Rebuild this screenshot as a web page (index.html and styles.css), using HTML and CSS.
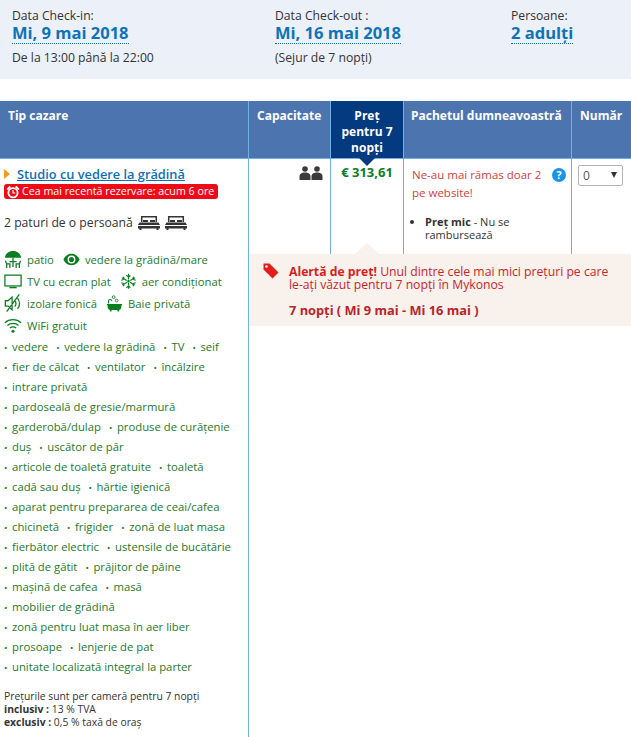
FILE: index.html
```html
<!DOCTYPE html>
<html lang="ro">
<head>
<meta charset="utf-8">
<title>Tip cazare</title>
<link rel="stylesheet" href="styles.css">
</head>
<body>
<section class="summary">
  <div class="sum-col sc1">
    <div class="sum-label">Data Check-in:</div>
    <div class="sum-value">Mi, 9 mai 2018</div>
    <div class="sum-note">De la 13:00 până la 22:00</div>
  </div>
  <div class="sum-col sc2">
    <div class="sum-label">Data Check-out :</div>
    <div class="sum-value">Mi, 16 mai 2018</div>
    <div class="sum-note">(Sejur de 7 nopți)</div>
  </div>
  <div class="sum-col sc3">
    <div class="sum-label">Persoane:</div>
    <div class="sum-value">2 adulţi</div>
  </div>
</section>

<div class="thead">
  <div class="th th1">Tip cazare</div>
  <div class="th th2">Capacitate</div>
  <div class="th th3">Preţ pentru 7 nopţi</div>
  <div class="th th4">Pachetul dumneavoastră</div>
  <div class="th th5">Număr</div>
</div>

<div class="tbody">
  <div class="room">
    <div class="room-title"><span class="arrow"></span><a class="room-link">Studio cu vedere la grădină</a></div>
    <div class="recent">
      <svg class="alarm" viewBox="0 0 14 14"><circle cx="7" cy="7.800" r="4.600" fill="none" stroke="#fff" stroke-width="1.800"/><path d="M7 5v3h2.300" fill="none" stroke="#fff" stroke-width="1.200"/><path d="M.5 4 3.500.8 5 2.300 2 5.300zM13.500 4 10.500.8 9 2.300l3 3z" fill="#fff"/></svg>
      <span>Cea mai recentă rezervare: acum 6 ore</span>
    </div>
    <div class="beds"><span>2 paturi de o persoană</span>
      <svg class="bed" viewBox="0 0 22 15"><path d="M3.700 7V1.700h14.600V7" fill="none" stroke="#333" stroke-width="1.500"/><path d="M5 5h5v2H5zM12 5h5v2h-5z" fill="#333"/><path d="M1.500 7.500h19L22 10H0zM0 11h22v2.500h-1.500V15h-2v-1.500h-15V15h-2v-1.500H0z" fill="#333"/></svg>
      <svg class="bed" viewBox="0 0 22 15"><path d="M3.700 7V1.700h14.600V7" fill="none" stroke="#333" stroke-width="1.500"/><path d="M5 5h5v2H5zM12 5h5v2h-5z" fill="#333"/><path d="M1.500 7.500h19L22 10H0zM0 11h22v2.500h-1.500V15h-2v-1.500h-15V15h-2v-1.500H0z" fill="#333"/></svg>
    </div>
    <div class="fac-icons">
      <div class="fac-row">
        <span class="fac"><svg class="ic" viewBox="0 0 20 20"><path d="M1 8.500C1.500 3.500 6 1 10 1s8.500 2.500 9 7.500z" fill="#0a7d1f"/><path d="M10 8v11M6 13h8M1.500 12l1.500 3.500V20M3 15.500h3.500V20M18.500 12 17 15.500V20M17 15.500h-3.500V20" fill="none" stroke="#0a7d1f" stroke-width="1.400"/></svg>patio</span>
        <span class="fac"><svg class="ic ic-s" viewBox="0 0 20 20"><path d="M.5 10C3 5 6.500 3.300 10 3.300s7 1.700 9.500 6.700c-2.500 5-6 6.700-9.500 6.700S3 15 .5 10z" fill="#0a7d1f"/><circle cx="10" cy="10" r="4.600" fill="#fff"/><circle cx="10" cy="10" r="3" fill="#0a7d1f"/></svg>vedere la grădină/mare</span>
      </div>
      <div class="fac-row">
        <span class="fac"><svg class="ic" viewBox="0 0 20 20"><rect x="1" y="3.500" width="18" height="12" fill="none" stroke="#0a7d1f" stroke-width="1.400"/><path d="M6 17.300h8" stroke="#0a7d1f" stroke-width="1.600"/></svg>TV cu ecran plat</span>
        <span class="fac"><svg class="ic ic-s" viewBox="0 0 20 20"><path d="M10 1v18M2.200 5.500l15.600 9M17.800 5.500l-15.600 9M7.500 2.500 10 5l2.500-2.500M7.500 17.500 10 15l2.500 2.500M1.500 8.500 5 7.500 4 4M18.500 8.500 15 7.500l1-3.500M1.500 11.500l3.500 1L4 16M18.500 11.500l-3.500 1 1 3.500" fill="none" stroke="#0a7d1f" stroke-width="1.400" stroke-dasharray="3 .6"/></svg>aer condiţionat</span>
      </div>
      <div class="fac-row">
        <span class="fac"><svg class="ic" viewBox="0 0 20 20"><path d="M1.500 7.500h3l4.500-4v14l-4.500-4h-3zM12 7c1.500 2 1.500 5 0 7M15 4.500c3 3.500 3 8.500 0 12M3 19.500 17 .5" fill="none" stroke="#0a7d1f" stroke-width="1.400"/></svg>izolare fonică</span>
        <span class="fac"><svg class="ic ic-s" viewBox="0 0 20 20"><path d="M1 10.500h18V12h-1v2.500c0 2-1.500 3-3 3H5c-1.500 0-3-1-3-3V12H1zM4.500 17.500h2V19.500h-2zM13.500 17.500h2V19.500h-2z" fill="#0a7d1f"/><path d="M3 10V7c0-2.300 3.500-2.300 4 0" fill="none" stroke="#0a7d1f" stroke-width="1.300"/><circle cx="9" cy="2.500" r="1.600" fill="none" stroke="#0a7d1f"/><circle cx="12.500" cy="6.500" r="1.600" fill="none" stroke="#0a7d1f"/></svg>Baie privată</span>
      </div>
      <div class="fac-row">
        <span class="fac"><svg class="ic" viewBox="0 0 20 20"><path d="M1 7.500C6 3 14 3 19 7.500M3.800 10.500c3.500-3 9-3 12.400 0M6.500 13.300c2-1.500 5-1.500 7 0" fill="none" stroke="#0a7d1f" stroke-width="1.400"/><circle cx="10" cy="17" r="1.700" fill="#0a7d1f"/></svg>WiFi gratuit</span>
      </div>
    </div>
    <ul class="amen">
      <li><span>vedere</span><span>vedere la grădină</span><span>TV</span><span>seif</span></li>
      <li><span>fier de călcat</span><span>ventilator</span><span>încălzire</span></li>
      <li><span>intrare privată</span></li>
      <li><span>pardoseală de gresie/marmură</span></li>
      <li><span>garderobă/dulap</span><span>produse de curățenie</span></li>
      <li><span>duş</span><span>uscător de păr</span></li>
      <li><span>articole de toaletă gratuite</span><span>toaletă</span></li>
      <li><span>cadă sau duş</span><span>hârtie igienică</span></li>
      <li><span>aparat pentru prepararea de ceai/cafea</span></li>
      <li><span>chicinetă</span><span>frigider</span><span>zonă de luat masa</span></li>
      <li><span>fierbător electric</span><span>ustensile de bucătărie</span></li>
      <li><span>plită de gătit</span><span>prăjitor de pâine</span></li>
      <li><span>maşină de cafea</span><span>masă</span></li>
      <li><span>mobilier de grădină</span></li>
      <li><span>zonă pentru luat masa în aer liber</span></li>
      <li><span>prosoape</span><span>lenjerie de pat</span></li>
      <li><span>unitate localizată integral la parter</span></li>
    </ul>
    <div class="tax">
      <div>Preţurile sunt per cameră pentru 7 nopţi</div>
      <div><b>inclusiv :</b> 13 % TVA</div>
      <div><b>exclusiv :</b> 0,5 % taxă de oraş</div>
    </div>
  </div>

  <div class="right">
    <div class="cells">
      <div class="cell c-cap">
        <svg class="people" viewBox="0 0 24 14"><circle cx="6" cy="3" r="2.800" fill="#3a3a3a"/><path d="M.5 14v-3.500C.5 7.500 3 6.500 6 6.500s5.500 1 5.500 4V14z" fill="#3a3a3a"/><circle cx="18" cy="3" r="2.800" fill="#3a3a3a"/><path d="M12.500 14v-3.500c0-3 2.500-4 5.500-4s5.500 1 5.500 4V14z" fill="#3a3a3a"/></svg>
      </div>
      <div class="cell c-price">€ 313,61</div>
      <div class="cell c-pack">
        <div class="left-wrap">
          <div class="left-msg">Ne-au mai rămas doar 2 pe website!</div>
          <span class="help">?</span>
        </div>
        <ul class="pack-list"><li><b>Preţ mic</b> - Nu se rambursează</li></ul>
      </div>
      <div class="cell c-num">
        <div class="select"><span>0</span><i></i></div>
      </div>
    </div>
    <div class="alert">
      <svg class="tag" viewBox="0 0 16 16"><path d="M.5 2.500V.5h6l9 9-6 6-9-9z" fill="#e31c1c"/><circle cx="3.500" cy="3.500" r="1.300" fill="#f9f1eb"/></svg>
      <div class="alert-body">
        <p class="alert-text"><b>Alertă de preţ!</b> Unul dintre cele mai mici preţuri pe care <span class="nowrap">le-aţi</span> văzut pentru 7 nopţi în Mykonos</p>
        <p class="alert-dates">7 nopți ( Mi 9 mai - Mi 16 mai )</p>
      </div>
    </div>
  </div>
</div>
</body>
</html>
```

FILE: styles.css
```css
* { box-sizing: border-box; }
html, body { margin: 0; padding: 0; }
body {
  width: 631px;
  height: 737px;
  overflow: hidden;
  background: #fff;
  color: #333;
  font-family: "Open Sans", "Noto Sans", sans-serif;
  font-size: 12px;
}
.summary {
  display: flex;
  height: 79px;
  background: #ebf0f9;
  padding-top: 8px;
}
.sum-col { flex: none; }
.sc1 { width: 263px; padding-left: 12px; }
.sc2 { width: 236px; padding-left: 12px; }
.sc3 { padding-left: 12px; }
.sum-label { font-size: 12.200px; line-height: 15px; }
.sum-value {
  display: table;
  font-size: 16.500px;
  line-height: 20px;
  font-weight: 700;
  color: #0f73b8;
  border-bottom: 1px dotted #0f73b8;
  margin-bottom: 6px;
}
.sum-note { font-size: 12.200px; line-height: 16px; }

.thead {
  display: grid;
  grid-template-columns: 249px 82px 73px 168px 59px;
  height: 58px;
  margin-top: 22px;
  background: #4c75b0;
  color: #fff;
  font-weight: 700;
  font-size: 12px;
  line-height: 16px;
  border-bottom: 1px solid #6fb1e2;
}
.th { padding: 7px 8px 0; border-right: 1px solid #6fb1e2; white-space: nowrap; }
.th4 { padding-left: 7px; }
.th5 { border-right: 0; }
.th3 {
  position: relative;
  background: #033a80;
  text-align: center;
  white-space: normal;
}
.th3::after {
  content: "";
  position: absolute;
  left: 50%;
  bottom: -8px;
  margin-left: -8px;
  border: 8px solid transparent;
  border-bottom: 0;
  border-top-color: #033a80;
}

.tbody { display: flex; height: 578px; }
.room {
  width: 249px;
  flex: none;
  border-right: 1px solid #6fb1e2;
  padding: 6px 0 0 4px;
}
.room-title {
  display: flex;
  align-items: center;
  font-size: 12.800px;
  line-height: 18px;
  font-weight: 600;
}
.arrow {
  width: 0;
  height: 0;
  border: 5px solid transparent;
  border-left: 6px solid #f39b1f;
  border-right: 0;
  margin-right: 7px;
}
.room-link { color: #0f6fb8; text-decoration: underline; }
.recent {
  display: flex;
  width: fit-content;
  align-items: center;
  height: 15px;
  margin-top: 1px;
  padding: 0 4px 0 2px;
  border-radius: 3px;
  background: #f00a18;
  color: #fff;
  font-size: 10.700px;
  line-height: 15px;
  white-space: nowrap;
}
.alarm { width: 14px; height: 14px; margin-right: 2px; flex: none; }
.beds {
  display: flex;
  align-items: center;
  gap: 5px;
  margin-top: 13px;
  height: 20px;
  font-size: 12.200px;
}
.bed { width: 22px; height: 15px; }
.fac-icons { margin-top: 16px; color: #1c7a2c; font-size: 11.300px; }
.fac-row { display: flex; gap: 9px; height: 22px; align-items: center; }
.fac { display: inline-flex; align-items: center; gap: 5px; white-space: nowrap; }
.ic { width: 18px; height: 18px; flex: none; }
.ic-s { width: 17px; height: 17px; }
.amen { list-style: none; margin: 1px 0 0; padding: 0; color: #1c7a2c; font-size: 11.300px; }
.amen li { height: 20px; line-height: 20px; white-space: nowrap; }
.amen span { margin-right: 8px; }
.amen span::before { content: "•"; display: inline-block; width: 8px; font-size: 9px; }
.tax { margin-top: 13px; font-size: 10.350px; line-height: 13px; }

.right { flex: 1; display: flex; flex-direction: column; }
.cells { display: grid; grid-template-columns: 82px 73px 168px 59px; height: 95px; }
.cell { border-right: 1px solid #6fb1e2; }
.c-num { border-right: 0; padding: 6px 0 0 6px; }
.c-cap { display: flex; justify-content: flex-end; padding: 7px 7px 0 0; }
.people { width: 24px; height: 14px; }
.c-price { text-align: center; color: #0a7d1f; font-weight: 700; font-size: 13px; padding-top: 4px; line-height: 18px; }
.c-pack { padding: 7px 0 0 8px; }
.left-wrap { position: relative; padding-right: 24px; }
.left-msg { color: #d6403a; font-size: 11.500px; line-height: 18px; }
.help {
  position: absolute;
  top: 2px;
  right: 5px;
  width: 14px;
  height: 14px;
  border-radius: 50%;
  background: #1a94e6;
  color: #fff;
  font-size: 10.500px;
  font-weight: 700;
  line-height: 14px;
  text-align: center;
}
.pack-list { margin: 13px 0 0; padding: 0 0 0 13px; font-size: 11px; line-height: 13px; }
.select {
  position: relative;
  width: 45px;
  height: 21px;
  border: 1px solid #b5b5b5;
  border-radius: 2px;
  padding-left: 4px;
  font-size: 12px;
  line-height: 20px;
  color: #555;
  background: #fff;
}
.select i {
  position: absolute;
  top: 6px;
  right: 5px;
  border: 3.500px solid transparent;
  border-bottom: 0;
  border-top: 6px solid #333;
}
.alert {
  position: relative;
  display: flex;
  height: 72px;
  background: #f9f1eb;
  padding: 11px 0 0 14px;
}
.alert::before {
  content: "";
  position: absolute;
  top: -11px;
  left: 106px;
  border: 12px solid transparent;
  border-top: 0;
  border-bottom: 11px solid #f9f1eb;
}
.tag { width: 16px; height: 16px; flex: none; margin: -2px 10px 0 0; }
.alert-body { color: #c8262a; font-size: 12.200px; }
.alert-text { margin: 0; line-height: 13px; }
.alert-text b { color: #d81e1e; }
.nowrap { white-space: nowrap; }
.alert-dates { margin: 11px 0 0; font-size: 12.800px; font-weight: 700; line-height: 16px; color: #b9242a; }
```
